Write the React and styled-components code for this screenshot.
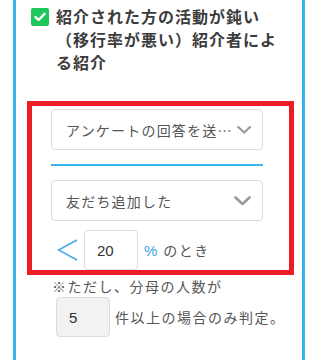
import styled, { createGlobalStyle } from "styled-components";

const GlobalStyle = createGlobalStyle`
  body {
    margin: 0;
    background: #fff;
    font-family: "Noto Sans CJK JP", "Noto Sans", sans-serif;
  }
`;

const ChevronDown = () => (
  <svg width="17" height="10" viewBox="0 0 17 10">
    <polyline points="1.5,1.5 8.5,8 15.5,1.5" fill="none" stroke="#9a9a9a" strokeWidth="2.6" strokeLinecap="round" strokeLinejoin="round" />
  </svg>
);

export default function App() {
  return (
    <>
      <GlobalStyle />
      <Panel>
        <Header>
          <CheckBox>
            <svg width="12" height="10" viewBox="0 0 12 10">
              <polyline points="1.5,5 4.6,8 10.5,1.8" fill="none" stroke="#fff" strokeWidth="2.4" strokeLinecap="round" strokeLinejoin="round" />
            </svg>
          </CheckBox>
          <Title>紹介された方の活動が鈍い（移行率が悪い）紹介者による紹介</Title>
        </Header>
        <Highlight>
          <Select>
            <SelectText>アンケートの回答を送…</SelectText>
            <ChevronDown />
          </Select>
          <Divider />
          <Select>
            <SelectText>友だち追加した</SelectText>
            <ChevronDown />
          </Select>
          <RateRow>
            <svg width="21" height="22" viewBox="0 0 21 22">
              <polyline points="20,1 1.5,11 20,21" fill="none" stroke="#4aa8e8" strokeWidth="1.6" />
            </svg>
            <NumberBox>20</NumberBox>
            <Percent>%</Percent>
            <Label>のとき</Label>
          </RateRow>
        </Highlight>
        <Note>※ただし、分母の人数が</Note>
        <CountRow>
          <NumberBox $filled>5</NumberBox>
          <Label>件以上の場合のみ判定。</Label>
        </CountRow>
      </Panel>
    </>
  );
}

const Panel = styled.div`
  margin-left: 13px;
  width: 286px;
  min-height: 360px;
  border-left: 3px solid #36b4ec;
  border-right: 3px solid #36b4ec;
  box-sizing: content-box;
`;

const Header = styled.div`
  display: flex;
  align-items: flex-start;
  gap: 7px;
  padding: 5px 14px 0 15px;
`;

const CheckBox = styled.div`
  flex: none;
  width: 18px;
  height: 18px;
  margin-top: 3px;
  border-radius: 2px;
  background: #1ec75b;
  display: flex;
  align-items: center;
  justify-content: center;
`;

const Title = styled.div`
  font-size: 16px;
  font-weight: 700;
  line-height: 23px;
  letter-spacing: 1px;
  color: #3c3c3c;
`;

const Highlight = styled.div`
  margin: 27px 0 0 11px;
  width: 267px;
  border: 5px solid #ee1c25;
  box-sizing: border-box;
  padding: 3px 26px 0 19px;
`;

const Select = styled.div`
  height: 41px;
  box-sizing: border-box;
  border: 1px solid #dcdcdc;
  border-radius: 4px;
  display: flex;
  align-items: center;
  gap: 4px;
  padding: 0 11px 0 14px;
`;

const SelectText = styled.span`
  flex: 1;
  white-space: nowrap;
  font-size: 14px;
  letter-spacing: 1.2px;
  color: #555;
`;

const Divider = styled.div`
  height: 2px;
  margin: 14px 0;
  background: #36b4ec;
`;

const RateRow = styled.div`
  display: flex;
  align-items: center;
  gap: 6px;
  margin-top: 9px;
  padding-left: 6px;
`;

const NumberBox = styled.div`
  width: 54px;
  height: 40px;
  box-sizing: border-box;
  border: 1px solid #dcdcdc;
  border-radius: 4px;
  background: ${({ $filled }) => ($filled ? "#f2f2f2" : "#fff")};
  display: flex;
  align-items: center;
  padding-left: 12px;
  font-family: "Liberation Sans", sans-serif;
  font-size: 15px;
  color: #333;
`;

const Percent = styled.span`
  font-family: "Liberation Sans", sans-serif;
  font-size: 15px;
  color: #3aa6e6;
`;

const Label = styled.span`
  font-size: 14px;
  letter-spacing: 1.5px;
  color: #555;
`;

const Note = styled.div`
  margin: 0 0 0 36px;
  font-size: 14px;
  line-height: 22px;
  letter-spacing: 1.5px;
  color: #555;
`;

const CountRow = styled.div`
  display: flex;
  align-items: center;
  gap: 5px;
  margin: 0 0 0 40px;
`;
